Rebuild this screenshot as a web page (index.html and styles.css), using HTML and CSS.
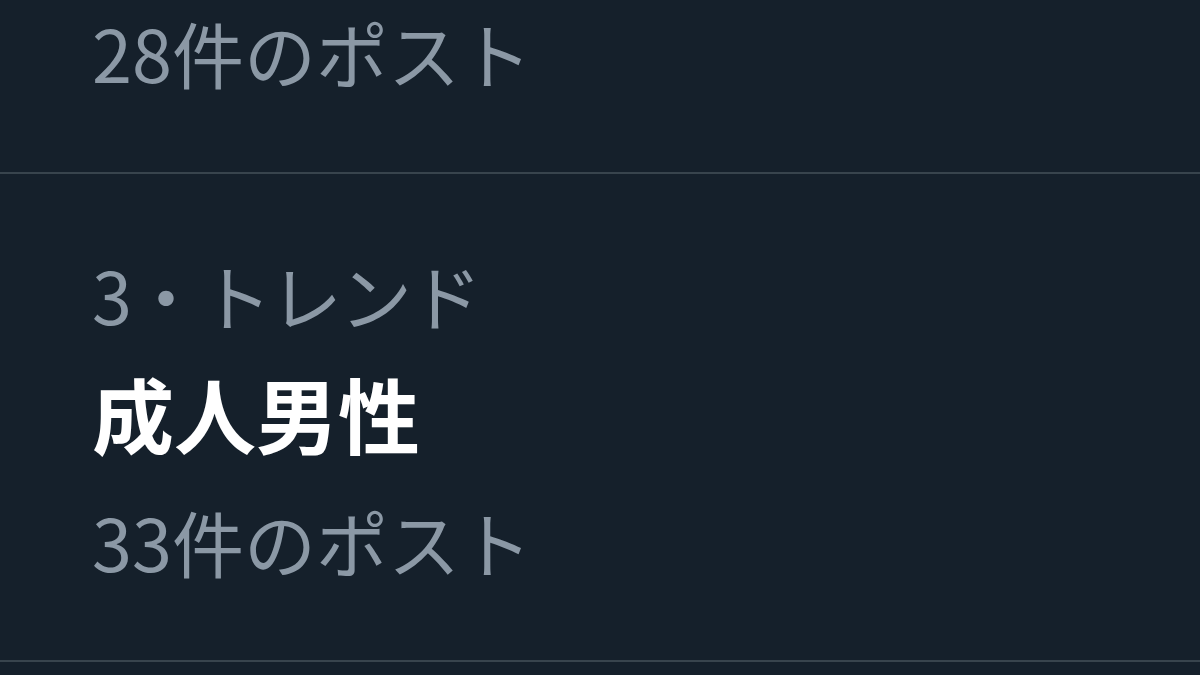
FILE: index.html
```html
<!DOCTYPE html>
<html lang="ja">
<head>
<meta charset="utf-8">
<title>トレンド</title>
<link rel="stylesheet" href="styles.css">
</head>
<body>
  <main class="trends">
    <section class="trend trend--partial">
      <div class="trend-count">28件のポスト</div>
    </section>
    <section class="trend">
      <div class="trend-meta">3・トレンド</div>
      <div class="trend-title">成人男性</div>
      <div class="trend-count trend-count--last">33件のポスト</div>
    </section>
  </main>
</body>
</html>
```
FILE: styles.css
```css
html, body {
  margin: 0;
  padding: 0;
  background: #15202b;
  height: 100%;
  overflow: hidden;
}

.trends {
  font-family: "Noto Sans CJK JP", "Noto Sans", sans-serif;
  color: #8b98a5;
}

.trend {
  padding: 70px 0 60px 92px;
  border-bottom: 2px solid #38444d;
}

.trend--partial {
  padding-top: 0;
  padding-bottom: 68px;
}

.trend-meta {
  font-size: 72px;
  line-height: 100px;
  letter-spacing: -2px;
}

.trend-title {
  font-size: 82px;
  line-height: 138px;
  font-weight: 700;
  color: #ffffff;
}

.trend-count {
  font-size: 72px;
  line-height: 104px;
  letter-spacing: 0;
}

.trend-count--last {
  line-height: 118px;
}
```
